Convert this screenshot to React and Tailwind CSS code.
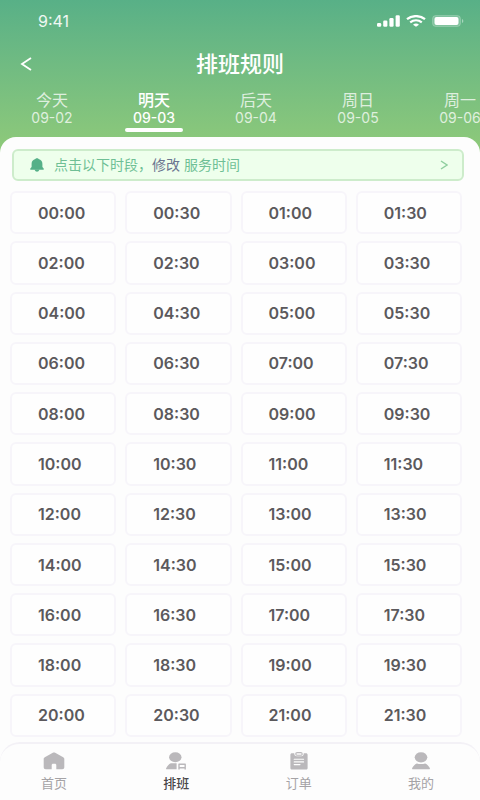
import { useState } from "react";

const days = [
  { label: "今天", date: "09-02" },
  { label: "明天", date: "09-03" },
  { label: "后天", date: "09-04" },
  { label: "周日", date: "09-05" },
  { label: "周一", date: "09-06" },
];

const navItems = [
  { label: "首页", icon: HomeIcon },
  { label: "排班", icon: ScheduleIcon },
  { label: "订单", icon: OrderIcon },
  { label: "我的", icon: ProfileIcon },
];

// half-hour slots from 00:00 to 21:30
const slots = Array.from({ length: 44 }, (_, i) => `${String(Math.floor(i / 2)).padStart(2, "0")}:${i % 2 ? "30" : "00"}`);

export default function App() {
  const [activeDay, setActiveDay] = useState("09-03");
  const [activeNav, setActiveNav] = useState("排班");

  return (
    <div className="flex min-h-screen flex-col overflow-x-hidden bg-[#fdfdfd] font-['Inter','Noto_Sans_CJK_SC',sans-serif]">
      <header className="bg-linear-to-b from-[#58b087] to-[#8fca79] pb-4">
        <StatusBar />

        <div className="grid h-12 grid-cols-[1fr_auto_1fr] items-center px-5">
          <button aria-label="返回" className="w-fit text-white">
            <svg width="12" height="14" viewBox="0 0 12 14" fill="none" stroke="currentColor" strokeWidth="1.8">
              <path d="M11 1L2 7L11 13" />
            </svg>
          </button>
          <h1 className="text-[22px] leading-8 font-medium text-white">排班规则</h1>
        </div>

        <div className="flex h-[49px] overflow-hidden pt-0.5">
          {days.map((day) => (
            <DayTab key={day.date} day={day} active={activeDay === day.date} onSelect={() => setActiveDay(day.date)} />
          ))}
        </div>
      </header>

      <main className="-mt-4 flex flex-1 flex-col rounded-t-[16px] bg-[#fdfdfd] pt-3">
        <button className="mr-4 ml-3 flex h-8 items-center rounded-md border-2 border-[#cdeccb] bg-[#eeffec] pr-3.5 pl-4 text-sm text-[#6fbf95]">
          <BellIcon />
          <span className="ml-2.5 whitespace-pre">
            点击以下时段，<span className="text-[#6b7590]">修改</span> 服务时间
          </span>
          <svg width="8" height="10" viewBox="0 0 8 10" fill="none" stroke="#8fcf9f" strokeWidth="1.5" className="ml-auto">
            <path d="M1 1L7 5L1 9" />
          </svg>
        </button>

        <div className="mt-2.5 mr-[18px] mb-[5px] ml-2.5 grid flex-1 auto-rows-fr grid-cols-4 gap-x-[9px] gap-y-[7px]">
          {slots.map((slot) => (
            <button
              key={slot}
              className="min-h-10 rounded-md border-2 border-[#f7f5fa] bg-[#fefefe] pl-[26px] text-left text-base font-semibold text-[#5b595c]"
            >
              {slot}
            </button>
          ))}
        </div>
      </main>

      <nav className="sticky bottom-0 flex justify-between rounded-t-[20px] border-t-2 border-[#f3f1f6] bg-[#fdfdfd] pt-2 pr-[35px] pb-2 pl-[30px]">
        {navItems.map(({ label, icon: Icon }) => (
          <button
            key={label}
            onClick={() => setActiveNav(label)}
            className="flex w-12 flex-col items-center gap-1 text-[#bab8bb]"
          >
            <Icon />
            <span className={`text-[13px] leading-[18px] ${activeNav === label ? "font-medium text-[#4a484b]" : "text-[#a5a3a6]"}`}>
              {label}
            </span>
          </button>
        ))}
      </nav>
    </div>
  );
}

function DayTab({ day, active, onSelect }) {
  return (
    <button
      onClick={onSelect}
      className={`flex w-[102px] shrink-0 flex-col items-center pl-0.5 ${active ? "font-medium text-white" : "text-white/75"}`}
    >
      <span className="text-base leading-5">{day.label}</span>
      <span className="text-sm leading-4">{day.date}</span>
      {active && <span className="mt-0.5 h-1 w-[58px] shrink-0 rounded-full bg-white" />}
    </button>
  );
}

function StatusBar() {
  return (
    <div className="flex h-10 items-center justify-between pt-0.5 pr-4 pl-[38px] text-white">
      <span className="text-base text-white/90">9:41</span>
      <div className="flex items-center gap-1.5">
        <svg width="23" height="12" viewBox="0 0 23 12" fill="currentColor">
          <rect x="0" y="8" width="4.2" height="3.8" rx="1.2" />
          <rect x="6.2" y="5.5" width="4.2" height="6.3" rx="1.2" />
          <rect x="12.4" y="3" width="4.2" height="8.8" rx="1.2" />
          <rect x="18.6" y="0.3" width="4.2" height="11.5" rx="1.2" />
        </svg>
        <svg width="20" height="12" viewBox="0 0 20 12" fill="none" stroke="currentColor" strokeWidth="2.2">
          <path d="M1 4.2C6 0 14 0 19 4.2" />
          <path d="M4.2 7.3C7.6 4.6 12.4 4.6 15.8 7.3" />
          <path d="M7 9.7C8.8 8.2 11.2 8.2 13 9.7L10 11.8Z" fill="currentColor" stroke="none" />
        </svg>
        <svg width="32" height="12" viewBox="0 0 32 12" fill="currentColor">
          <rect x="0.5" y="0.5" width="28" height="11" rx="3.2" fillOpacity="0.2" stroke="currentColor" strokeOpacity="0.2" />
          <rect x="2.5" y="2" width="24" height="8" rx="2" />
          <path d="M30 4C31.8 4.6 31.8 7.4 30 8Z" fillOpacity="0.45" />
        </svg>
      </div>
    </div>
  );
}

function BellIcon() {
  return (
    <svg width="14" height="14" viewBox="0 0 14 14" fill="#55b088">
      <path d="M7 .3C8 .3 8.5.7 8.6 1.1C11 1.7 12.4 3.4 12.4 5.8V8.9L13.7 10.6V11.7H.3V10.6L1.6 8.9V5.8C1.6 3.4 3 1.7 5.4 1.1C5.5.7 6 .3 7 .3Z" />
      <path d="M4.6 11.5H9.4C8.9 13.1 8.1 13.7 7 13.7C5.9 13.7 5.1 13.1 4.6 11.5Z" />
    </svg>
  );
}

function HomeIcon() {
  return (
    <svg width="22" height="18" viewBox="0 0 22 18" fill="currentColor">
      <path d="M9.8.8C10.6.3 11.4.3 12.2.8L20.2 5.3C21 5.8 21.3 6.3 21.3 7.1V15.2C21.3 16.5 20.6 17.2 19.2 17.2H13.3V13.2C13.3 12.2 12.8 11.7 11.8 11.7H10.2C9.2 11.7 8.7 12.2 8.7 13.2V17.2H2.8C1.4 17.2.7 16.5.7 15.2V7.1C.7 6.3 1 5.8 1.8 5.3Z" />
    </svg>
  );
}

function ScheduleIcon() {
  return (
    <svg width="22" height="18" viewBox="0 0 22 18" fill="currentColor">
      <ellipse cx="10.3" cy="5.2" rx="6.2" ry="5" />
      <path d="M5.8 11.3H11.6V17.3H1.9C1 17.3.8 16.7 1.3 15.9C2.4 14 3.8 12.3 5.8 11.3Z" />
      <path d="M14 12.2H20.2V15.8H14ZM14 15V17.4M20.2 15V17.4" fill="none" stroke="currentColor" strokeWidth="1.4" strokeLinejoin="round" />
    </svg>
  );
}

function OrderIcon() {
  return (
    <svg width="22" height="18" viewBox="0 0 22 18" fill="currentColor">
      <path d="M4 1.3H6.2C6.3 3.3 7 4.2 8.8 4.2H13.2C15 4.2 15.7 3.3 15.8 1.3H18C19 1.3 19.6 1.9 19.6 2.8V15.9C19.6 16.9 19 17.5 18 17.5H4C3 17.5 2.4 16.9 2.4 15.9V2.8C2.4 1.9 3 1.3 4 1.3Z" />
      <rect x="7.8" y="0.6" width="6.4" height="2.6" rx="1.3" fill="none" stroke="currentColor" strokeWidth="1.1" />
      <path d="M6.2 7.2H15.6M6.2 9.9H15.6M6.2 12.6H12" stroke="#fdfdfd" strokeWidth="1.1" strokeLinecap="round" />
    </svg>
  );
}

function ProfileIcon() {
  return (
    <svg width="22" height="18" viewBox="0 0 22 18" fill="currentColor">
      <ellipse cx="11" cy="5.3" rx="6.3" ry="5.1" />
      <path d="M6.8 11.4C9.5 12.3 12.5 12.3 15.2 11.4C17.3 12.3 18.9 14 19.8 16C20.1 16.8 19.8 17.3 19 17.3H3C2.2 17.3 1.9 16.8 2.2 16C3.1 14 4.7 12.3 6.8 11.4Z" />
    </svg>
  );
}
